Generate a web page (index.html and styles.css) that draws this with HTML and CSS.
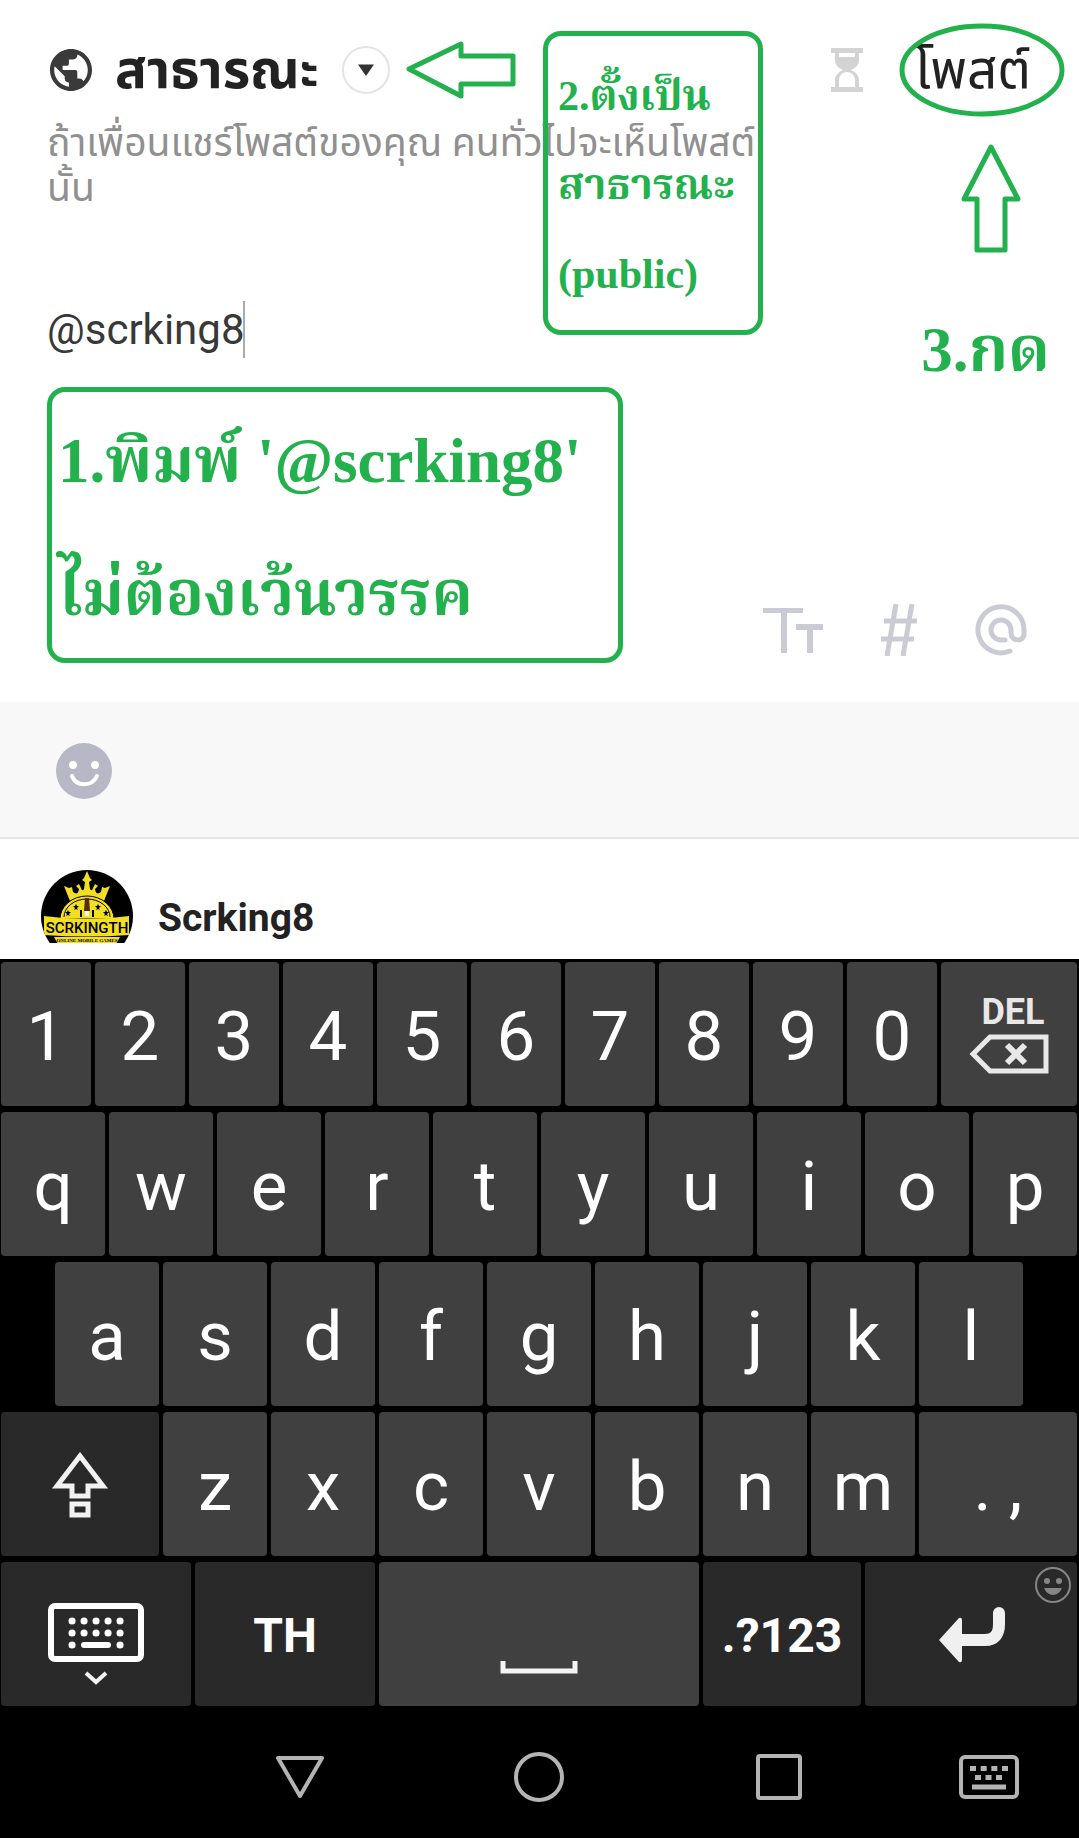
FILE: index.html
```html
<!DOCTYPE html>
<html lang="th">
<head>
<meta charset="utf-8">
<meta name="viewport" content="width=device-width, initial-scale=1">
<title>โพสต์</title>
<link rel="stylesheet" href="styles.css">
</head>
<body>
<main class="composer">
  <header class="topbar">
    <button class="audience" type="button" aria-haspopup="listbox">
      <svg class="globe" viewBox="2 2 20 20" aria-hidden="true"><path fill="#3a3a3a" d="M12 2C6.48 2 2 6.48 2 12s4.48 10 10 10 10-4.48 10-10S17.52 2 12 2zm-1 17.93c-3.95-.49-7-3.85-7-7.93 0-.62.08-1.21.21-1.79L9 15v1c0 1.1.9 2 2 2v1.93zm6.9-2.54c-.26-.81-1-1.39-1.9-1.39h-1v-3c0-.55-.45-1-1-1H8v-2h2c.55 0 1-.45 1-1V7h2c1.1 0 2-.9 2-2v-.41c2.93 1.19 5 4.06 5 7.41 0 2.08-.8 3.97-2.1 5.39z"/></svg>
      <span class="audience-name">สาธารณะ</span>
      <svg class="chevron" viewBox="0 0 48 48" aria-hidden="true"><circle cx="24" cy="24" r="23" fill="#fff" stroke="#e4e4e4" stroke-width="2"/><path d="M16 18.500h16L24 30z" fill="#333"/></svg>
    </button>
    <svg class="arrow-left" viewBox="0 0 110 60" aria-hidden="true"><path d="M3 29 55 4V16H107V44H55V56Z"/></svg>
    <svg class="hourglass" viewBox="0 0 32 44" aria-hidden="true"><g fill="#d3d3d3"><path d="M0 0h32v5H0zM0 39h32v5H0z"/><path fill-rule="evenodd" d="M4 5h24v7c0 6-4 8-8 10 4 2 8 5 8 10v7H4v-7c0-5 4-8 8-10-4-2-8-4-8-10zM8 5v4h16V5zM16 24c-5 0-8 4-8 8v7h16v-7c0-4-3-8-8-8z"/></g></svg>
    <button class="post" type="button">โพสต์</button>
  </header>
  <p class="hint">ถ้าเพื่อนแชร์โพสต์ของคุณ คนทั่วไปจะเห็นโพสต์<br>นั้น</p>
  <div class="entry"><input class="entry-field" type="text" aria-label="โพสต์" value="@scrking8"></div>
  <div class="lower">
    <p class="note note-type">1.พิมพ์ '@scrking8'<br>ไม่ต้องเว้นวรรค</p>
    <div class="tools">
      <button type="button" aria-label="Text"><svg width="60" height="52" viewBox="0 0 60 52"><path d="M0 4h40v5H24v40h-6V9H0zM33 20h27v6H50v23h-6V26H33z" fill="#cbcbd5"/></svg></button>
      <button type="button" aria-label="Hashtag"><svg width="38" height="52" viewBox="0 0 38 52"><path d="M16 0 7 52M32 0 23 52M4 17H37M1 35H34" fill="none" stroke="#cbcbd5" stroke-width="5"/></svg></button>
      <button type="button" aria-label="Mention"><svg width="52" height="52" viewBox="0 0 52 52"><path d="M35 47A23 23 0 1 1 49 26V30C49 38 36 38 36 29V26A10 10 0 1 0 26 36H30" fill="none" stroke="#cbcbd5" stroke-width="5" stroke-linecap="round"/></svg></button>
    </div>
  </div>
  <p class="note note-public">2.ตั้งเป็น<br>สาธารณะ<br>(public)</p>
  <svg class="ring" viewBox="0 0 166 94" aria-hidden="true"><ellipse cx="83" cy="47" rx="80" ry="44"/></svg>
  <svg class="arrow-up" viewBox="0 0 60 110" aria-hidden="true"><path d="M30 4 57 56H44V107H16V56H3Z"/></svg>
  <p class="note note-press">3.กด</p>
</main>
<div class="stickers">
  <button type="button" aria-label="Sticker"><svg width="56" height="56" viewBox="0 0 56 56"><circle cx="28" cy="28" r="28" fill="#b7b7c5"/><circle cx="17" cy="22" r="4" fill="#fff"/><circle cx="39" cy="22" r="4" fill="#fff"/><path d="M16 33c4 11 20 11 25 0" fill="none" stroke="#fff" stroke-width="4" stroke-linecap="round"/></svg></button>
</div>
<a class="suggestion" href="#">
  <svg class="avatar" viewBox="0 0 94 73" aria-hidden="true">
    <clipPath id="disc"><circle cx="47" cy="46" r="46"/></clipPath>
    <g clip-path="url(#disc)">
      <path fill="#000" d="M0 0h94v73H0z"/>
      <path fill="#f3df22" d="M30 31 24 16l5 2 3-1 1 5q5 4 6-3l-3-3 3-2 2 4q1 4 3 1l1-7-3-2 2-2 3-7 3 7 2 2-3 2 1 7q2 3 3-1l2-4 3 2-3 3q1 7 6 3l1-5 3 1 5-2-6 15Q47 23 30 31z"/>
      <path fill="#f3df22" stroke="#000" d="M20 49a27 23 0 0 1 54 0z"/>
      <path fill="none" stroke="#000" d="M24 47a23 18 0 0 1 46 0"/>
      <path fill="#000" d="m36 34 1 2h2l-2 2 1 2-2-1-2 1 1-2-2-2h2zM58 34l1 2h2l-2 2 1 2-2-1-2 1 1-2-2-2h2zM28 40l1 2h2l-2 2 1 2-2-1-2 1 1-2-2-2h2zM66 40l1 2h2l-2 2 1 2-2-1-2 1 1-2-2-2h2z"/>
      <path fill="#5b2a12" d="M45 28h4l1 13h-6z"/><path fill="#fff" d="M45 41h4v5h-4z"/><path fill="none" stroke="#000" stroke-width="2" d="M41 40v7M53 40v7"/>
      <path fill="#f3df22" d="M4 46q43 6 85 0v19q-42 3-85 0z"/>
      <path fill="#f3df22" d="M14 67h66l-4 7H18z"/>
    </g>
    <text class="logo-name" x="47" y="63">SCRKINGTH</text>
    <text class="logo-line" x="47" y="72">ONLINE MOBILE GAMES</text>
  </svg>
  <span>Scrking8</span>
</a>
<section class="keyboard" aria-label="Keyboard">
  <div class="keys keys-digits">
    <button>1</button><button>2</button><button>3</button><button>4</button><button>5</button><button>6</button><button>7</button><button>8</button><button>9</button><button>0</button>
    <button class="del"><span>DEL</span><svg width="80" height="40" viewBox="0 0 80 40" aria-hidden="true"><path d="M4 20 21 3H77V37H21Z" fill="none" stroke="#e8e8e8" stroke-width="5"/><path d="M38 11 56 29M56 11 38 29" stroke="#e8e8e8" stroke-width="6"/></svg></button>
  </div>
  <div class="keys">
    <button>q</button><button>w</button><button>e</button><button>r</button><button>t</button><button>y</button><button>u</button><button>i</button><button>o</button><button>p</button>
  </div>
  <div class="keys keys-home">
    <button>a</button><button>s</button><button>d</button><button>f</button><button>g</button><button>h</button><button>j</button><button>k</button><button>l</button>
  </div>
  <div class="keys keys-shift">
    <button class="dark" aria-label="Shift"><svg width="58" height="66" viewBox="0 0 58 66"><path d="M29 4 52 34H37V44H21V34H6ZM21 52H37V63H21Z" fill="none" stroke="#f2f2f2" stroke-width="5"/></svg></button>
    <button>z</button><button>x</button><button>c</button><button>v</button><button>b</button><button>n</button><button>m</button><button>. ,</button>
  </div>
  <div class="keys keys-bottom">
    <button class="dark" aria-label="Hide keyboard"><svg width="96" height="104" viewBox="0 0 96 104"><rect x="3" y="23" width="90" height="53" rx="4" fill="none" stroke="#fff" stroke-width="6"/><path d="M24 38h.1M36 38h.1M48 38h.1M60 38h.1M72 38h.1M24 50h.1M36 50h.1M48 50h.1M60 50h.1M72 50h.1M24 62h.1M72 62h.1" stroke="#fff" stroke-width="7" stroke-linecap="round"/><path d="M36 62H60" stroke="#fff" stroke-width="6" stroke-linecap="round"/><path d="M38 90 48 99 58 90" fill="none" stroke="#f4f4f4" stroke-width="4"/></svg></button>
    <button class="dark word">TH</button>
    <button aria-label="Space"><svg width="78" height="80" viewBox="0 0 78 80"><path d="M3 64V74H75V64" fill="none" stroke="#f4f4f4" stroke-width="5"/></svg></button>
    <button class="dark word">.?123</button>
    <button class="dark enter" aria-label="Enter"><svg width="68" height="58" viewBox="0 0 68 58"><path d="M61 7V18Q61 34 47 34H20" fill="none" stroke="#f0f0f0" stroke-width="12" stroke-linecap="round"/><path d="M1 34 21 12Q24 11 24 14V54Q24 57 21 56Z" fill="#f0f0f0"/></svg>
      <svg class="smile" viewBox="0 0 38 38"><circle cx="19" cy="19" r="17" fill="none" stroke="#868686" stroke-width="2"/><circle cx="13" cy="15" r="3" fill="#868686"/><circle cx="25" cy="15" r="3" fill="#868686"/><path d="M10 22H28Q25 29 19 29T10 22Z" fill="#868686"/></svg></button>
  </div>
</section>
<nav class="sysnav" aria-label="System">
  <button class="back" aria-label="Back"><svg width="50" height="44" viewBox="0 0 50 44"><path d="M3 3H47L25 41Z" fill="none" stroke="#b4b4b4" stroke-width="4" stroke-linejoin="round"/></svg></button>
  <button aria-label="Home"><svg width="50" height="50" viewBox="0 0 50 50"><circle cx="25" cy="25" r="23" fill="none" stroke="#b4b4b4" stroke-width="4"/></svg></button>
  <button aria-label="Recents"><svg width="46" height="46" viewBox="0 0 46 46"><rect x="2" y="2" width="42" height="42" rx="2" fill="none" stroke="#b4b4b4" stroke-width="4"/></svg></button>
  <button aria-label="Switch keyboard"><svg width="60" height="44" viewBox="0 0 60 44"><rect x="2" y="2" width="56" height="40" rx="4" fill="none" stroke="#b4b4b4" stroke-width="4"/><path d="M11 13.500H49" stroke="#b4b4b4" stroke-width="5" stroke-dasharray="6 4.670"/><path d="M16 22.500H44" stroke="#b4b4b4" stroke-width="5" stroke-dasharray="6 4.500"/><path d="M13 32H47" stroke="#b4b4b4" stroke-width="5"/></svg></button>
</nav>
</body>
</html>
```

FILE: styles.css
```css
* { box-sizing: border-box; }

body {
  margin: 0;
  min-height: 100vh;
  display: flex;
  flex-direction: column;
  background: #fff;
  color: #222;
  font-family: Roboto, "Noto Sans Thai", "Noto Sans", sans-serif;
}

button {
  padding: 0;
  border: 0;
  background: none;
  color: inherit;
  font: inherit;
}

p { margin: 0; }
svg { display: block; flex: none; }

.composer {
  position: relative;
  padding: 45px 48px 39px 47px;
}

.topbar {
  display: flex;
  align-items: center;
  height: 50px;
}

.audience {
  display: flex;
  align-items: center;
  gap: 23px;
  font-size: 53px;
  line-height: 50px;
  font-weight: 700;
}
.globe { width: 42px; height: 42px; margin-left: 3px; }
.chevron { width: 48px; height: 48px; }

.arrow-left { width: 110px; height: 60px; margin-left: 16px; }
.arrow-left path, .arrow-up path, .ring ellipse {
  fill: none;
  stroke: #22b14c;
  stroke-width: 5;
  stroke-linejoin: round;
}

.hourglass { width: 32px; height: 44px; margin-left: auto; }
.post { margin-left: 52px; font-size: 53px; line-height: 50px; }

.hint {
  max-width: 730px;
  margin-top: 26px;
  color: #909090;
  font-size: 39px;
  line-height: 45px;
}

.entry { display: flex; margin-top: 90px; }
.entry-field {
  width: 198px;
  height: 57px;
  padding: 0;
  border: 0;
  border-right: 2px solid #aaa;
  outline: 0;
  background: none;
  color: #383838;
  font: 42px/57px Roboto, sans-serif;
}

.lower {
  display: flex;
  align-items: flex-end;
  justify-content: space-between;
  margin-top: 29px;
  padding-right: 4px;
}

.tools { display: flex; gap: 57px; padding-bottom: 7px; }

.note {
  color: #22b14c;
  font-family: "Liberation Serif", "Noto Serif Thai", serif;
  font-weight: 700;
}
.note-type, .note-public { border: 5px solid #22b14c; border-radius: 18px; }
.note-type {
  width: 576px;
  height: 276px;
  padding: 3px 6px;
  font-size: 63px;
  line-height: 133px;
}
.note-public {
  position: absolute;
  top: 31px;
  left: 543px;
  width: 220px;
  height: 304px;
  padding: 16px 10px;
  font-size: 42px;
  line-height: 89px;
}
.note-press {
  position: absolute;
  top: 315px;
  right: 29px;
  font-size: 63px;
  line-height: 70px;
}
.ring { position: absolute; top: 23px; right: 14px; width: 166px; height: 94px; }
.arrow-up { position: absolute; top: 143px; right: 58px; width: 60px; height: 110px; }

.stickers {
  display: flex;
  padding: 41px 56px 38px;
  border-bottom: 2px solid #e5e5e5;
  background: #f8f8f8;
}

.suggestion {
  display: flex;
  align-items: center;
  gap: 24px;
  padding: 31px 40px 16px;
  color: #222;
  font-size: 39px;
  font-weight: 700;
  text-decoration: none;
}
.suggestion span { padding-top: 22px; line-height: 46px; }
.avatar { width: 94px; height: 73px; }
.logo-name { font: 500 15px Roboto, sans-serif; text-anchor: middle; }
.logo-line { font: 700 5px "Liberation Serif", serif; text-anchor: middle; }

.keyboard {
  display: grid;
  gap: 6px;
  padding: 3px 2px 0 1px;
  background: #000;
  color: #fff;
}
.keys {
  display: grid;
  grid-template-columns: repeat(10, 1fr);
  gap: 4px;
}
.keys-digits { grid-template-columns: repeat(10, 90fr) 136fr; }
.keys-home { grid-template-columns: repeat(9, 1fr); padding: 0 54px; }
.keys-shift { grid-template-columns: 158fr repeat(7, 104fr) 158fr; }
.keys-bottom { grid-template-columns: 190fr 180fr 320fr 158fr 212fr; }

.keys button {
  display: flex;
  align-items: center;
  justify-content: center;
  min-width: 0;
  height: 144px;
  padding-top: 5px;
  border-radius: 4px;
  background: #404040;
  font-size: 69px;
  line-height: 80px;
}
.keys .dark { padding-top: 2px; background: #292929; }
.keys .word { padding-top: 4px; font-size: 48px; font-weight: 700; }
.keys .del { flex-direction: column; gap: 4px; padding-top: 0; color: #e8e8e8; }
.del span { padding-left: 8px; font-size: 36px; line-height: 36px; font-weight: 700; }
.keys .enter { position: relative; padding-left: 2px; }
.smile { position: absolute; top: 4px; right: 5px; width: 38px; height: 38px; }

.sysnav {
  flex: 1;
  display: grid;
  grid-template-columns: 3fr 4fr 4fr 4fr 3fr;
  min-height: 132px;
  padding-top: 10px;
  background: #000;
}
.sysnav button { display: flex; align-items: center; justify-content: center; }
.back { grid-column: 2; }
```
